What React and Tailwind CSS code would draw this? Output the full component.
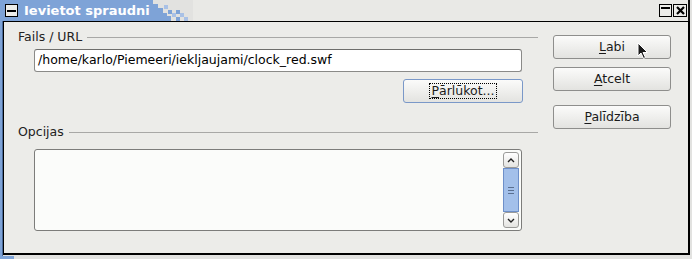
import React from 'react';

const font = { fontFamily: '"DejaVu Sans", sans-serif' };

function Btn({ label, u, rest, focused, className = '' }) {
  return (
    <button
      className={`h-[24px] rounded-[3px] border bg-gradient-to-b from-[#fbfbfa] to-[#e3e3e0] text-[12.5px] text-[#1a1a1a] flex items-center justify-center ${
        focused ? 'border-[#7a98c8]' : 'border-[#8e8e8c]'
      } ${className}`}
    >
      <span className={focused ? 'outline outline-1 outline-dotted outline-black px-[1px] leading-[14px]' : 'leading-[14px]'}>
        <span className="underline underline-offset-2">{u}</span>
        {rest}
      </span>
    </button>
  );
}

function GroupTitle({ children }) {
  return (
    <div className="flex items-center h-[16px] gap-[5px]">
      <span className="text-[12.5px] text-[#222]">{children}</span>
      <div className="flex-1 h-px bg-[#a8a8a6]" />
    </div>
  );
}

function Stairs() {
  const blue = '#7ea3d7';
  const light = '#a9c1e6';
  return (
    <svg width="40" height="21" viewBox="0 0 40 21">
      <rect x="0" y="4" width="5" height="17" fill={blue} />
      <rect x="5" y="8" width="5" height="13" fill={blue} />
      <rect x="10" y="13" width="4" height="8" fill={blue} />
      <rect x="14" y="16" width="4" height="5" fill={blue} />
      <rect x="11" y="5" width="4" height="4" fill={light} />
      <rect x="15" y="10" width="4" height="4" fill={blue} />
      <rect x="19" y="13" width="4" height="4" fill={light} />
      <rect x="23" y="10" width="4" height="4" fill={blue} />
      <rect x="27" y="13" width="4" height="4" fill={light} />
      <rect x="23" y="17" width="4" height="4" fill={blue} />
      <rect x="31" y="17" width="4" height="4" fill={light} />
    </svg>
  );
}

export default function App() {
  return (
    <div className="w-[692px] h-[259px] bg-[#e2e2e0] relative overflow-hidden" style={font}>
      {/* title bar */}
      <div className="h-[21px] flex items-stretch border-r-2 border-r-[#111] mr-[2px]">
        <div className="bg-[#7ea3d7] flex items-center pl-[5px] pr-[3px]">
          <div className="w-[13px] h-[13px] bg-[#ecece9] border border-black flex items-center justify-center">
            <div className="w-[9px] h-[2px] bg-black" />
          </div>
          <span className="ml-[6px] text-[13px] font-bold text-white leading-none">Ievietot spraudni</span>
        </div>
        <Stairs />
        <div className="flex-1 bg-[#e9e9e6] flex items-center justify-end gap-[1px] pr-[1px]">
          <div className="w-[13px] h-[13px] bg-[#ecece9] border border-black flex justify-center">
            <div className="w-[9px] h-[2px] bg-black mt-[2px]" />
          </div>
          <div className="w-[14px] h-[13px] bg-[#ecece9] border border-black flex items-center justify-center">
            <svg width="9" height="9" viewBox="0 0 9 9">
              <path d="M1 1 L8 8 M8 1 L1 8" stroke="black" strokeWidth="2.2" />
            </svg>
          </div>
        </div>
      </div>

      {/* window frame */}
      <div className="flex h-[238px]">
        <div className="w-[3px] bg-[#7ea3d7] border-r border-r-[#4a6a9a]" />
        <div className="w-[687px] h-[234px] border-2 border-l border-t border-black bg-[#ecece9] flex pl-[14px] pt-[7px]">
          {/* left column */}
          <div className="w-[520px] flex flex-col">
            <GroupTitle>Fails / URL</GroupTitle>
            <div className="ml-[16px] mt-[4px] w-[488px] h-[23px] bg-white border border-[#8a8a88] border-t-[#6e6e6c] rounded-[3px] flex items-center px-[3px] text-[12.5px] text-black">
              /home/karlo/Piemeeri/iekljaujami/clock_red.swf
            </div>
            <div className="flex justify-end mr-[15px] mt-[7px]">
              <Btn u="P" rest="ārlūkot..." focused className="w-[120px]" />
            </div>
            <div className="mt-[21px]">
              <GroupTitle>Opcijas</GroupTitle>
            </div>
            <div className="ml-[16px] mt-[9px] w-[488px] h-[82px] bg-[#fbfcfa] border border-[#7c7c7a] rounded-[3px] flex justify-end p-[2px]">
              <div className="w-[16px] flex flex-col">
                <div className="h-[16px] rounded-[3px] border border-[#9a9a98] bg-gradient-to-b from-white to-[#e4e4e1] flex items-center justify-center">
                  <svg width="8" height="5" viewBox="0 0 8 5"><path d="M1 4 L4 1 L7 4" stroke="#222" strokeWidth="1.4" fill="none" /></svg>
                </div>
                <div className="flex-1 bg-[#a3c0ea] border border-[#6d8fc9] flex flex-col items-center justify-center gap-[2px]">
                  <div className="w-[6px] h-px bg-[#5a6f90]" />
                  <div className="w-[6px] h-px bg-[#5a6f90]" />
                  <div className="w-[6px] h-px bg-[#5a6f90]" />
                </div>
                <div className="h-[16px] rounded-[3px] border border-[#9a9a98] bg-gradient-to-b from-white to-[#e4e4e1] flex items-center justify-center">
                  <svg width="8" height="5" viewBox="0 0 8 5"><path d="M1 1 L4 4 L7 1" stroke="#222" strokeWidth="1.4" fill="none" /></svg>
                </div>
              </div>
            </div>
          </div>
          {/* right column */}
          <div className="ml-[15px] pt-[6px] flex flex-col">
            <div className="relative">
              <Btn u="L" rest="abi" className="w-[118px]" />
              <svg className="absolute left-[84px] top-[7px]" width="12" height="18" viewBox="0 0 12 18">
                <path d="M1 1 L1 14 L4 11 L6.5 16.5 L8.5 15.5 L6 10.5 L10.5 10.5 Z" fill="#1a1a1a" stroke="white" strokeWidth="1" />
              </svg>
            </div>
            <Btn u="A" rest="tcelt" className="w-[118px] mt-[8px]" />
            <Btn u="P" rest="alīdzība" className="w-[118px] mt-[14px]" />
          </div>
        </div>
      </div>
      <div className="absolute left-0 bottom-0 w-[14px] h-[3px] bg-[#7ea3d7]" />
    </div>
  );
}
